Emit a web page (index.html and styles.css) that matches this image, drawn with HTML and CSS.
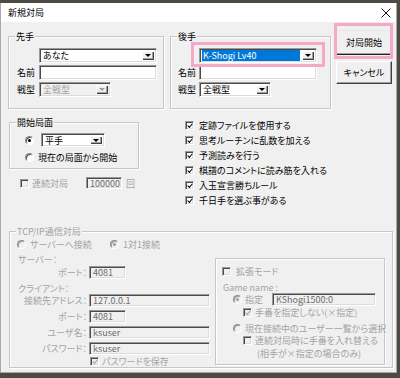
FILE: index.html
```html
<!DOCTYPE html>
<html lang="ja">
<head>
<meta charset="utf-8">
<title>新規対局</title>
<link rel="stylesheet" href="styles.css">
</head>
<body>
<div class="win">
  <div class="titlebar">
    <span class="title">新規対局</span>
    <svg class="close" width="10" height="10" viewBox="0 0 10 10"><path d="M0.5 0.5L9.5 9.5M9.5 0.5L0.5 9.5" stroke="#111" stroke-width="1"/></svg>
  </div>
  <div class="client">
    <div class="row1">
      <div class="group g-sente">
        <span class="legend">先手</span>
        <div class="pform">
          <span></span>
          <div class="combo w118"><span class="ctext">あなた</span><span class="cbtn"><i></i></span></div>
          <span class="lbl">名前</span>
          <div class="tbox w118"></div>
          <span class="lbl">戦型</span>
          <div class="combo w72 dis"><span class="ctext">全戦型</span><span class="cbtn"><i></i></span></div>
        </div>
      </div>
      <div class="group g-gote">
        <span class="legend">後手</span>
        <div class="pform">
          <span></span>
          <div class="combo w118"><span class="ctext"><b class="sel">K-Shogi Lv40</b></span><span class="cbtn"><i></i></span></div>
          <span class="lbl">名前</span>
          <div class="tbox w118"></div>
          <span class="lbl">戦型</span>
          <div class="combo w72"><span class="ctext">全戦型</span><span class="cbtn"><i></i></span></div>
        </div>
        <span class="hl hl-combo"></span>
      </div>
      <div class="btns">
        <div class="btn def">対局開始</div>
        <div class="btn">キャンセル</div>
        <span class="hl hl-btn"></span>
      </div>
    </div>

    <div class="row2">
      <div class="leftcol">
        <div class="group g-start">
          <span class="legend">開始局面</span>
          <div class="srow r1"><span class="radio on"></span><div class="combo w64"><span class="ctext">平手</span><span class="cbtn"><i></i></span></div></div>
          <div class="srow r2"><span class="radio"></span><span>現在の局面から開始</span></div>
        </div>
        <div class="renzoku dtext">
          <span class="cb dis"></span><span class="rz-label">連続対局</span>
          <div class="tbox dis w36">100000</div>
          <span class="kai">回</span>
        </div>
      </div>
      <div class="checks">
        <div class="crow"><span class="cb on"></span><span>定跡ファイルを使用する</span></div>
        <div class="crow"><span class="cb on"></span><span>思考ルーチンに乱数を加える</span></div>
        <div class="crow"><span class="cb on"></span><span>予測読みを行う</span></div>
        <div class="crow"><span class="cb on"></span><span>棋譜のコメントに読み筋を入れる</span></div>
        <div class="crow"><span class="cb on"></span><span>入玉宣言勝ちルール</span></div>
        <div class="crow"><span class="cb on"></span><span>千日手を選ぶ事がある</span></div>
      </div>
    </div>

    <div class="group g-tcp dtext">
      <span class="legend">TCP/IP通信対局</span>
      <div class="tcp-left">
        <div class="trow radios">
          <span class="radio dis"></span><span class="rl1">サーバーへ接続</span>
          <span class="radio dis on"></span><span>1対1接続</span>
        </div>
        <div class="trow t-head t-server">サーバー：</div>
        <div class="trow t-field t-port1"><span class="tl">ポート：</span><div class="tbox dis w37">4081</div></div>
        <div class="trow t-head t-client">クライアント：</div>
        <div class="trow t-field t-addr"><span class="tl">接続先アドレス：</span><div class="tbox dis w121">127.0.0.1</div></div>
        <div class="trow t-field t-gap"><span class="tl">ポート：</span><div class="tbox dis w37">4081</div></div>
        <div class="trow t-field t-gap"><span class="tl">ユーザ名：</span><div class="tbox dis w121">ksuser</div></div>
        <div class="trow t-field t-gap"><span class="tl">パスワード：</span><div class="tbox dis w121">ksuser</div></div>
        <div class="trow t-save"><span class="cb dis on"></span><span>パスワードを保存</span></div>
      </div>
      <div class="group g-ext">
        <div class="erow e-mode"><span class="cb dis"></span><span>拡張モード</span></div>
        <div class="erow e-gname">Game name :</div>
        <div class="erow e-spec"><span class="radio dis on"></span><span class="e-spec-l">指定</span><div class="tbox dis w104">KShogi1500:0</div></div>
        <div class="erow e-nox"><span class="cb dis on"></span><span>手番を指定しない(×指定)</span></div>
        <div class="erow e-list"><span class="radio dis"></span><span>現在接続中のユーザー一覧から選択</span></div>
        <div class="erow e-swap"><span class="cb dis"></span><span>連続対局時に手番を入れ替える</span></div>
        <div class="erow e-note">(相手が×指定の場合のみ)</div>
      </div>
    </div>
  </div>
</div>
</body>
</html>
```

FILE: styles.css
```css
* { box-sizing: border-box; margin: 0; padding: 0; }

html, body { width: 400px; height: 378px; overflow: hidden; }

body {
  background: #4e4942;
  font-family: "Noto Sans CJK JP", "Noto Sans", sans-serif;
  font-size: 9px;
  font-feature-settings: "palt";
  color: #000;
  line-height: 1;
}

.win {
  margin-top: 3px;
  width: 397px;
  height: 370px;
  background: #f0f0f0;
  border-left: 1px solid #a8a8a8;
  border-right: 1px solid #a8a8a8;
  border-bottom: 1px solid #a8a8a8;
  display: flex;
  flex-direction: column;
}

.titlebar {
  height: 19px;
  background: #fff;
  display: flex;
  align-items: center;
  justify-content: space-between;
  padding: 0 5px 0 7px;
  flex: none;
}
.title { font-size: 9px; }

.client {
  display: flex;
  flex-direction: column;
  padding-left: 7px;
}

/* group box */
.group {
  position: relative;
  border: 1px solid #c6c6c6;
  box-shadow: inset 1px 1px #fff, 1px 1px #fff;
}
.legend {
  position: absolute;
  top: -6px;
  left: 6px;
  padding: 0 1px;
  background: #f0f0f0;
  line-height: 11px;
}

/* row 1 */
.row1 { display: flex; align-items: flex-start; margin-top: 8px; }
.g-sente { margin-top: 6px; width: 156px; height: 73px; padding: 11px 0 0 7px; }
.g-gote { margin-top: 6px; margin-left: 6px; width: 161px; height: 73px; padding: 11px 0 0 6px; }
.pform {
  display: grid;
  grid-template-columns: 23px auto;
  grid-auto-rows: 15px;
  row-gap: 2px;
  align-items: center;
  justify-items: start;
}
.g-gote .pform { grid-template-columns: 22px auto; }
.lbl { padding-left: 1px; }

.btns { position: relative; margin-left: 5px; width: 56px; display: flex; flex-direction: column; }
.btn {
  height: 25px;
  display: flex;
  align-items: center;
  justify-content: center;
  background: #f0f0f0;
  border: 1px solid;
  border-color: #fff #404040 #404040 #fff;
  box-shadow: inset -1px -1px #a0a0a0;
}
.btn.def { border-color: #e8e8e8 #202020 #202020 #e8e8e8; }
.btn + .btn { margin-top: 6px; height: 23px; }

/* pink highlights */
.hl { position: absolute; border: 3px solid #f4a9c9; pointer-events: none; }
.hl-combo { left: 20px; top: 5px; width: 134px; height: 25px; }
.hl-btn { left: -2px; top: -7px; width: 59px; height: 36px; }

/* combobox */
.combo {
  height: 15px;
  display: flex;
  background: #fff;
  border: 1px solid;
  border-color: #9a9a9a #fff #fff #9a9a9a;
  box-shadow: inset 1px 1px #4a4a4a, inset -1px -1px #dcdcdc;
  padding: 1px 2px 1px 2px;
}
.ctext { flex: 1; display: flex; align-items: center; padding-left: 1px; white-space: nowrap; }
.cbtn {
  width: 12px;
  margin: 1px 0;
  background: #f0f0f0;
  box-shadow: inset 1px 1px #fff, inset -1px -1px #404040, inset -2px -2px #a0a0a0;
  display: flex;
  align-items: center;
  justify-content: center;
}
.cbtn i { width: 0; height: 0; border-left: 3px solid transparent; border-right: 3px solid transparent; border-top: 3px solid #000; }
.combo.dis { background: #f0f0f0; color: #a0a0a0; }
.combo.dis .cbtn i { border-top-color: #a0a0a0; }
.sel { font-weight: normal; background: #0078d7; color: #fff; flex: 1; height: 100%; display: flex; align-items: center; padding-left: 1px; margin-left: -1px; margin-right: 2px; }
.w118 { width: 118px; }
.w72 { width: 72px; }
.w64 { width: 64px; height: 14px; }

/* text box */
.tbox {
  height: 15px;
  background: #fff;
  border: 1px solid;
  border-color: #9a9a9a #fff #fff #9a9a9a;
  box-shadow: inset 1px 1px #4a4a4a, inset -1px -1px #dcdcdc;
  display: flex;
  align-items: center;
  padding-left: 3px;
  white-space: nowrap;
}
.tbox.dis { background: #f0f0f0; color: #6d6d6d; height: 13px; }
.w36 { width: 36px; }
.w37 { width: 37px; }
.w121 { width: 121px; }
.w104 { width: 104px; }

/* checkbox */
.cb {
  position: relative;
  flex: none;
  width: 9px;
  height: 9px;
  background: #fff;
  border: 1px solid;
  border-color: #9a9a9a #fff #fff #9a9a9a;
  box-shadow: inset 1px 1px #4a4a4a, inset -1px -1px #dcdcdc;
}
.cb.on::after {
  content: "";
  position: absolute;
  left: 1px;
  top: 0px;
  width: 4px;
  height: 2px;
  border-left: 1.5px solid #000;
  border-bottom: 1.5px solid #000;
  transform: translate(0.5px, 1.5px) rotate(-50deg);
  transform-origin: 50% 50%;
}
.cb.dis { background: #f0f0f0; }
.cb.dis.on::after { border-color: #a0a0a0; }

/* radio */
.radio {
  flex: none;
  width: 9px;
  height: 9px;
  border-radius: 50%;
  background: #fff;
  border: 1px solid;
  border-color: #8a8a8a #fff #fff #8a8a8a;
  box-shadow: inset 1px 1px #505050;
  display: flex;
  align-items: center;
  justify-content: center;
}
.radio.on::after { content: ""; width: 3px; height: 3px; border-radius: 50%; background: #000; }
.radio.dis { background: #f0f0f0; box-shadow: inset 1px 1px #a0a0a0; }
.radio.dis.on::after { background: #a0a0a0; }

/* row 2 */
.row2 { display: flex; align-items: flex-start; }
.leftcol { margin-left: 1px; width: 130px; margin-top: 13px; }
.g-start { height: 47px; padding: 10px 0 0 15px; }
.srow { display: flex; align-items: center; }
.srow .radio { margin-right: 7px; }
.srow.r1 { height: 14px; }
.srow.r2 { margin-top: 4px; height: 12px; }
.srow.r2 .radio { margin-right: 3px; }
.srow.r2 > span:last-child { margin-left: 1px; }

.dtext { color: #a3a3a3; }
.renzoku { margin-top: 8px; height: 12px; display: flex; align-items: center; padding-left: 11px; }
.renzoku .cb { margin-right: 3px; }
.rz-label { width: 54px; }
.renzoku .tbox { height: 12px; }
.kai { margin-left: 4px; }

.checks { margin-left: 46px; margin-top: 9px; }
.crow { height: 15px; display: flex; align-items: center; }
.crow .cb { margin-right: 5px; }

/* TCP group */
.g-tcp { margin-left: 1px; margin-top: 23px; width: 384px; height: 137px; display: flex; align-items: flex-start; padding: 6px 0 0 7px; }
.tcp-left { width: 194px; }
.trow { display: flex; align-items: center; }
.radios { height: 12px; }
.radios .radio { margin-right: 4px; }
.rl1 { width: 80px; }
.t-head { height: 12px; padding-left: 1px; }
.t-server { margin-top: 3px; }
.t-client { margin-top: 3px; }
.t-field { height: 13px; }
.t-port1 { margin-top: 1px; }
.t-gap { margin-top: 3px; }
.tl { width: 70px; text-align: right; margin-right: 2px; white-space: nowrap; }
.t-save { margin-top: 1px; height: 11px; padding-left: 73px; }
.t-save .cb { margin-right: 3px; }

.g-ext { margin-left: 4px; margin-top: 20px; width: 170px; height: 107px; padding: 7px 0 0 6px; }
.erow { display: flex; align-items: center; white-space: nowrap; }
.e-mode { height: 10px; }
.e-mode .cb { margin-right: 5px; }
.e-gname { margin-top: 5px; height: 12px; padding-left: 1px; }
.e-spec { height: 13px; padding-left: 11px; }
.e-spec .radio { margin-right: 3px; }
.e-spec-l { width: 27px; }
.e-nox { margin-top: 1px; height: 10px; padding-left: 21px; }
.e-nox .cb { margin-right: 3px; }
.e-list { margin-top: 5px; height: 12px; padding-left: 11px; }
.e-list .radio { margin-right: 3px; }
.e-swap { margin-top: 1px; height: 11px; padding-left: 21px; }
.e-swap .cb { margin-right: 3px; }
.e-note { margin-top: 2px; height: 11px; padding-left: 35px; }
```
